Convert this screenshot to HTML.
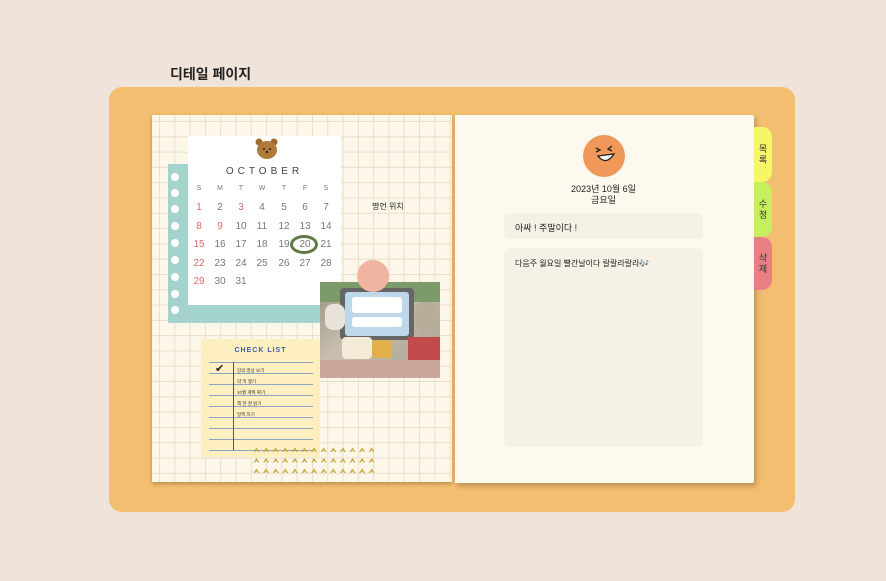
<!DOCTYPE html>
<html><head><meta charset="utf-8"><style>
*{margin:0;padding:0;box-sizing:border-box}
body{width:886px;height:581px;background:#f0e4da;font-family:"Liberation Sans","Noto Sans CJK KR",sans-serif;position:relative;overflow:hidden;color:#222}
.abs{position:absolute}
.title{left:170px;top:64px;font-size:14px;font-weight:bold}
.box{left:109px;top:87px;width:686px;height:425px;background:#f3be6f;border-radius:13px}
.lp{left:152px;top:115px;width:300px;height:367px;background-color:#fdf7ea;
background-image:linear-gradient(#e8dfcb 1px,transparent 1px),linear-gradient(90deg,#e8dfcb 1px,transparent 1px);
background-size:15.3px 15.3px;background-position:7px 6px;box-shadow:0 2px 4px rgba(0,0,0,.25)}
.rp{left:455px;top:115px;width:299px;height:368px;background:#fef9ee;box-shadow:2px 3px 6px rgba(0,0,0,.25);border-radius:0 2px 2px 0}
.tab{left:754px;width:18px;border-radius:0 10px 10px 0;font-size:9px;color:#333;writing-mode:vertical-lr;text-orientation:upright;display:flex;align-items:center;justify-content:center;letter-spacing:2px}
.teal{left:168px;top:164px;width:154px;height:159px;background:#a3d3cc}
.hole{position:absolute;left:3px;width:8px;height:8px;border-radius:50%;background:#fff}
.card{left:188px;top:136px;width:153px;height:169px;background:#fff}
.cal{position:absolute;left:0;top:0;width:153px}
.cal span{position:absolute;width:22px;text-align:center;font-size:10px;color:#777}
.r{color:#e06a6a!important}
.img{left:320px;top:282px;width:120px;height:96px;background:linear-gradient(135deg,#9a9486,#c8bfae 40%,#a8a090);overflow:hidden}
.chk{left:201px;top:339px;width:119px;height:118px;background:#fdefc0}
.row{position:absolute;left:8px;width:104px;height:1px;background:#8ea3c2}
</style></head><body>
<div class="abs title">디테일 페이지</div>
<div class="abs box"></div>
<div class="abs lp"></div>
<div class="abs rp"></div>
<div class="abs tab" style="top:127px;height:55px;background:#f6f567">목록</div>
<div class="abs tab" style="top:182px;height:55px;background:#c6ee5f">수정</div>
<div class="abs tab" style="top:237px;height:53px;background:#e97f83">삭제</div>

<div class="abs teal">
<div class="hole" style="top:9px"></div><div class="hole" style="top:25px"></div><div class="hole" style="top:41px"></div><div class="hole" style="top:58px"></div><div class="hole" style="top:75px"></div><div class="hole" style="top:92px"></div><div class="hole" style="top:109px"></div><div class="hole" style="top:126px"></div><div class="hole" style="top:142px"></div>
</div>
<div class="abs card">
<svg class="abs" style="left:67px;top:2px" width="24" height="22"><circle cx="4" cy="4" r="3.5" fill="#a0692e"/><circle cx="19" cy="4" r="3.5" fill="#a0692e"/><ellipse cx="12" cy="12" rx="10" ry="9" fill="#b07a3a"/><circle cx="9" cy="11" r="1" fill="#222"/><circle cx="15" cy="11" r="1" fill="#222"/><circle cx="12" cy="14" r="1.2" fill="#222"/></svg>
<div class="abs" style="left:0;top:30px;width:153px;text-align:center;font-size:10px;letter-spacing:4px;color:#444">OCTOBER</div>
<div class="cal">
<span style="left:0;top:49px;font-size:7px">S</span><span style="left:21px;top:49px;font-size:7px">M</span><span style="left:42px;top:49px;font-size:7px">T</span><span style="left:63px;top:49px;font-size:7px">W</span><span style="left:85px;top:49px;font-size:7px">T</span><span style="left:106px;top:49px;font-size:7px">F</span><span style="left:127px;top:49px;font-size:7px">S</span>
<span class="r" style="left:0;top:66px">1</span><span style="left:21px;top:66px">2</span><span class="r" style="left:42px;top:66px">3</span><span style="left:63px;top:66px">4</span><span style="left:85px;top:66px">5</span><span style="left:106px;top:66px">6</span><span style="left:127px;top:66px">7</span>
<span class="r" style="left:0;top:85px">8</span><span class="r" style="left:21px;top:85px">9</span><span style="left:42px;top:85px">10</span><span style="left:63px;top:85px">11</span><span style="left:85px;top:85px">12</span><span style="left:106px;top:85px">13</span><span style="left:127px;top:85px">14</span>
<span class="r" style="left:0;top:103px">15</span><span style="left:21px;top:103px">16</span><span style="left:42px;top:103px">17</span><span style="left:63px;top:103px">18</span><span style="left:85px;top:103px">19</span><span style="left:106px;top:103px">20</span><span style="left:127px;top:103px">21</span>
<span class="r" style="left:0;top:122px">22</span><span style="left:21px;top:122px">23</span><span style="left:42px;top:122px">24</span><span style="left:63px;top:122px">25</span><span style="left:85px;top:122px">26</span><span style="left:106px;top:122px">27</span><span style="left:127px;top:122px">28</span>
<span class="r" style="left:0;top:140px">29</span><span style="left:21px;top:140px">30</span><span style="left:42px;top:140px">31</span>
</div>
<div class="abs" style="left:102px;top:99px;width:28px;height:19px;border:3px solid #5f7a46;border-radius:50%"></div>
</div>
<div class="abs" style="left:372px;top:201px;font-size:8px">명언 위치</div>

<div class="abs img">
<div class="abs" style="left:0;top:0;width:120px;height:20px;background:#7d9a6a"></div>
<div class="abs" style="left:20px;top:6px;width:74px;height:52px;background:#666;border-radius:4px"></div>
<div class="abs" style="left:25px;top:10px;width:64px;height:44px;background:#bcd8ea;border-radius:3px"></div>
<div class="abs" style="left:32px;top:15px;width:50px;height:16px;background:#fff;border-radius:3px"></div>
<div class="abs" style="left:32px;top:35px;width:50px;height:10px;background:#fff;border-radius:3px"></div>
<div class="abs" style="left:5px;top:22px;width:20px;height:26px;background:#e8e2d8;border-radius:8px"></div>
<div class="abs" style="left:95px;top:20px;width:22px;height:28px;background:#b7ad98;border-radius:8px"></div>
<div class="abs" style="left:22px;top:55px;width:30px;height:22px;background:#f5ead8;border-radius:4px"></div>
<div class="abs" style="left:52px;top:58px;width:20px;height:18px;background:#e2b04a;border-radius:3px"></div>
<div class="abs" style="left:88px;top:55px;width:32px;height:24px;background:#c24a4a"></div>
<div class="abs" style="left:0;top:78px;width:120px;height:18px;background:#c9a89a"></div>
</div>
<div class="abs" style="left:357px;top:260px;width:32px;height:32px;border-radius:50%;background:#efb5a0"></div>

<div class="abs chk">
<div class="abs" style="left:0;top:8px;width:119px;text-align:center;font-size:7px;font-weight:bold;color:#3f5fa8;letter-spacing:1px">CHECK LIST</div>
<div class="row" style="top:23px"></div><div class="row" style="top:34px"></div><div class="row" style="top:45px"></div><div class="row" style="top:56px"></div><div class="row" style="top:67px"></div><div class="row" style="top:78px"></div><div class="row" style="top:89px"></div><div class="row" style="top:100px"></div><div class="row" style="top:111px"></div>
<div class="abs" style="left:32px;top:23px;width:1px;height:88px;background:#a33"></div>
<div class="abs" style="left:14px;top:23px;font-size:11px">✔</div>
<div class="abs" style="left:36px;top:26px;font-size:4.5px;line-height:11px;color:#333">강의 영상 보기<br>약 먹 챙기<br>10월 계획 짜기<br>책 한 권 읽기<br>일찍 자기</div>
</div>
<svg class="abs" style="left:252px;top:445px" width="122" height="30">
<defs><pattern id="p" width="9.6" height="10.5" patternUnits="userSpaceOnUse"><path d="M1.5 7 L4.5 2.5 L7.5 7 L6 7 L4.5 5 L3 7 Z" fill="#c9a43a"/></pattern></defs>
<rect width="122" height="30" fill="url(#p)"/></svg>

<svg class="abs" style="left:582px;top:134px" width="44" height="44"><circle cx="22" cy="22" r="21" fill="#f0975a"/><path d="M14 14 l4 2 -4 2 M30 12 l-4 3 4 2" stroke="#222" fill="none" stroke-width="1.3"/><path d="M16 22 q8 10 16 -2 z" fill="#fff" stroke="#222" stroke-width="1.3"/></svg>
<div class="abs" style="left:504px;top:184px;width:199px;text-align:center;font-size:9px;line-height:11px">2023년 10월 6일<br>금요일</div>
<div class="abs" style="left:504px;top:213px;width:199px;height:26px;background:#f5f1e7;border-radius:5px;font-size:9px;padding:8px 0 0 11px">아싸 ! 주말이다 !</div>
<div class="abs" style="left:504px;top:248px;width:199px;height:199px;background:#f5f1e7;border-radius:6px;font-size:8px;padding:10px 0 0 11px">다음주 월요일 빨간날이다 랄랄라랄라🎶</div>
</body></html>
